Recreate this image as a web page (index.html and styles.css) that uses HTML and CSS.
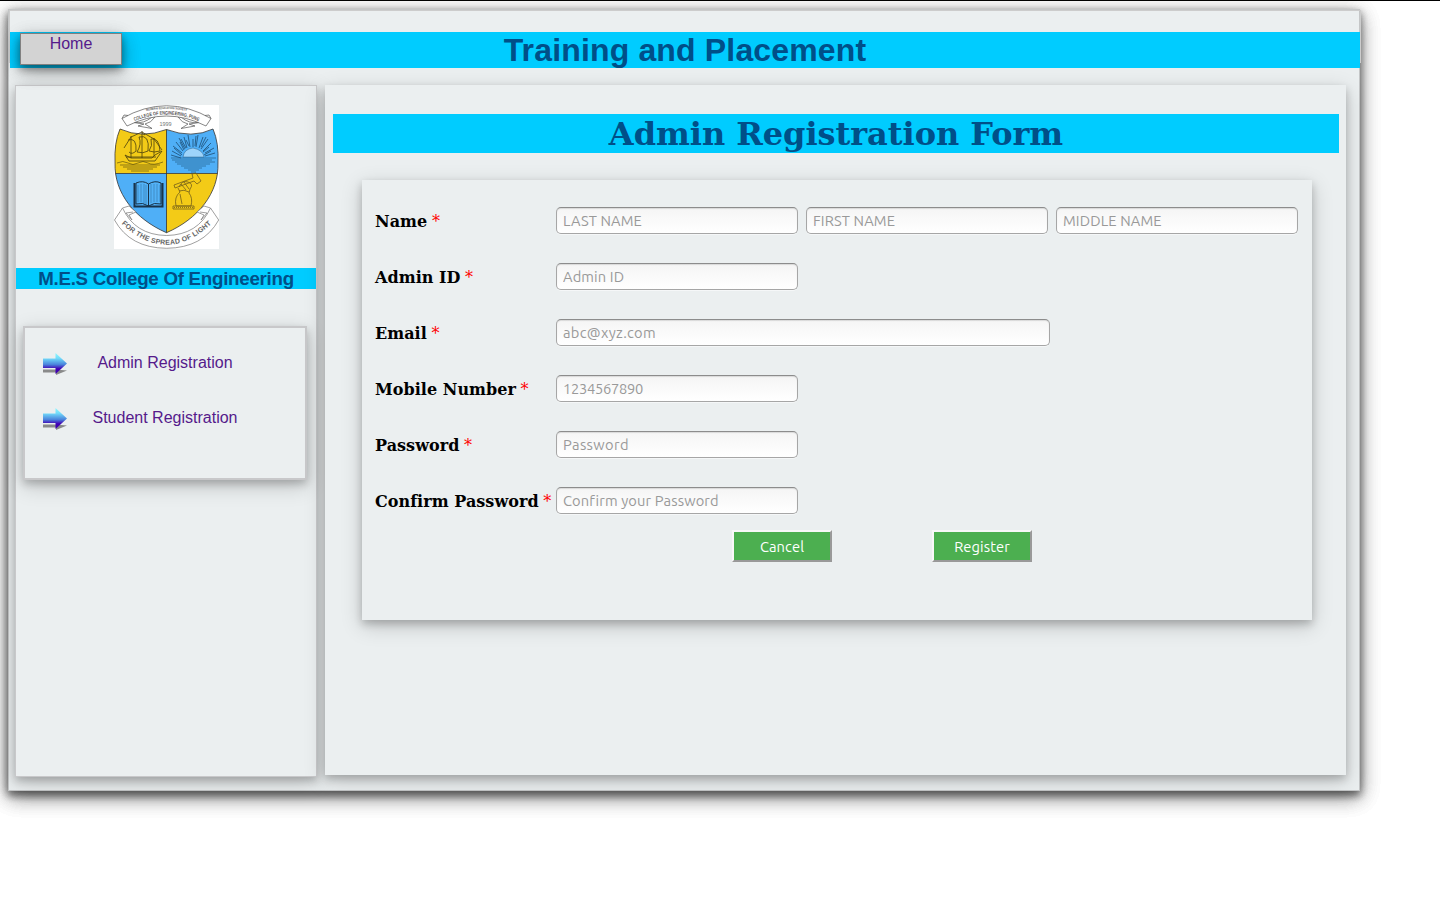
FILE: index.html
```html
<!DOCTYPE html>
<html lang="en">
<head>
<meta charset="utf-8">
<title>Training and Placement</title>
<link rel="stylesheet" href="styles.css">
</head>
<body>
<div class="page">
  <header class="header">
    <h1>Training and Placement</h1>
    <a class="home">Home</a>
  </header>
  <div class="columns">
    <aside class="sidebar">
      <svg class="crest" width="105" height="144" viewBox="0 0 105 144">
        <defs>
          <clipPath id="shield"><path d="M6 24Q28 34 52.500 24.500Q78 34 99 24Q105 38 104 58C105 88 84 114 52.500 127.700C21 114 0 88 1 58Q0 38 6 24Z"/></clipPath>
          <path id="topArc" d="M13 19.500Q52.500 -.5 92 19.500"/>
          <path id="topArc2" d="M26 7.500Q52.500 .5 79 7.500"/>
          <path id="lowArc" d="M5 116.500Q52.500 163 100 116.500"/>
        </defs>
        <rect width="105" height="144" fill="#fff"/>
        <g clip-path="url(#shield)">
          <rect y="20" width="53" height="48.500" fill="#f3cb17"/>
          <rect x="52.500" y="20" width="53" height="48.500" fill="#4faff7"/>
          <rect y="68.500" width="53" height="62" fill="#4faff7"/>
          <rect x="52.500" y="68.500" width="53" height="62" fill="#f3cb17"/>
          <path d="M52.500 20V130M0 68.500H105" stroke="#333" stroke-width=".8"/>
        </g>
        <path d="M6 24Q28 34 52.500 24.500Q78 34 99 24Q105 38 104 58C105 88 84 114 52.500 127.700C21 114 0 88 1 58Q0 38 6 24Z" fill="none" stroke="#333" stroke-width=".8"/>
        <!-- upper ribbon -->
        <g fill="#fff" stroke="#555" stroke-width=".7">
          <path d="M38 12Q30 19 20 17.500L30 19L24 21L38 23.500L31 19Q37 18 41 12ZM67 12Q75 19 85 17.500L75 19L81 21L67 23.500L74 19Q68 18 64 12Z"/>
          <path d="M8 13.500Q52.500-12 97 13.500L92 21Q52.500 1 13 21L8 13.500ZM8 13.500L10 10L14 10.500M97 13.500L95 10L91 10.500"/>
        </g>
        <text class="crest-text" fill="#555"><textPath class="small" href="#topArc2" startOffset="50%" text-anchor="middle" textLength="41" lengthAdjust="spacingAndGlyphs">MODERN EDUCATION SOCIETY</textPath><textPath href="#topArc" startOffset="50%" text-anchor="middle" textLength="66" lengthAdjust="spacingAndGlyphs">COLLEGE OF ENGINEERING, PUNE</textPath></text>
        <text class="crest-year" x="51.500" y="20.500" text-anchor="middle" fill="#777">1999</text>
        <!-- ship -->
        <g fill="none" stroke="#4a400e" stroke-width=".8">
          <path d="M11 50L15 56H41L48 46L41 50L38 53H17ZM17 53V31M28 53V26M40 51V33"/>
          <path d="M14 35Q23 32 22 46Q18 50 15 47M25 32Q36 29 34 46Q29 49 23 47Q28 39 25 32M37 34Q45 32 46 46Q40 48 35 46Q39 41 37 34M10 43L17 32L28 27L40 34L48 45M28 28L31 30M12 52H42"/>
          <path d="M3 58Q9 55 14 58T24 58T34 58T49 57M6 60H46M9 62H43M13 64H39M17 66H35" stroke-width=".6"/>
        </g>
        <!-- rising sun -->
        <g stroke="#1d4d72" fill="none" stroke-width=".8">
          <path d="M69 52Q70 44 79 43Q89 45 90 52Z" fill="#9ed4fb" stroke-width=".4"/>
          <path d="M67 51L58 46M68 48L59 41M69 46L62 37M71 44L65 33M73 43L70 32M76 42L74 30M79 42V34M82 42L84 30M85 43L89 32M87 44L94 34M89 46L97 38M91 48L100 43M91 51L101 48M67 53L57 50M75 41L72 35M81 41L82 31M87 42L92 32M68 50L60 43M70 45L66 37M89 47L95 42M90 50L97 46M72 43L67 34"/>
          <path d="M57 53H102M58 55H98M61 57H101M63 59H96M67 61H92M70 63H88M74 65H85M77 67H82" stroke-width=".6"/>
        </g>
        <!-- open book -->
        <g fill="none" stroke="#18334a">
          <path d="M20.500 78V101.500H48.500V78" stroke-width="2"/>
          <path d="M22 78Q29 75 34.500 79Q41 75 47 78V99Q40 97 34.500 101Q29 97 22 99ZM34.500 79V101" fill="#52b2f7" stroke-width="1"/>
          <path d="M24 80V97M27 79V97M30 79V98M37 79V98M40 79V97M43 79V97M46 80V97M32 80V99" stroke-width=".3"/>
        </g>
        <!-- hand with hammer -->
        <g fill="none" stroke="#73601a" stroke-width=".8">
          <path d="M60 80L79 73L78 69L82 68L87 76L83 79L80 76L61 83ZM65 82Q68 75 74 77Q80 79 76 84L75 88Q79 93 77 101H62Q60 92 66 87L64 83M67 79L72 85M70 77L75 84M65 86Q70 84 75 87M59 101H80V104H59ZM66 89L68 99"/>
          <path d="M60 102.500H80" stroke-dasharray="1 1"/>
        </g>
        <!-- motto ribbon -->
        <g fill="#fff" stroke="#777" stroke-width=".7">
          <path d="M8.500 103Q21 130 52.500 130.500Q84 130 96.500 103L104.700 115Q89 143 52.500 143.300Q16 143 .5 115Z"/>
          <path d="M8.500 103L15 101L22 107L15 110L18 115L12 108L19 107M96.500 103L90 101L83 107L90 110L87 115L93 108L86 107"/>
        </g>
        <text class="crest-motto" fill="#666"><textPath href="#lowArc" startOffset="50%" text-anchor="middle" textLength="102">FOR THE SPREAD OF LIGHT</textPath></text>
      </svg>
      <h3>M.E.S College Of Engineering</h3>
      <nav class="menu">
        <div class="menu-row">
          <svg class="arrow" width="27" height="24" viewBox="0 0 27 24">
            <defs>
              <linearGradient id="blue" x1="0" y1="0" x2="0" y2="1"><stop offset="0" stop-color="#8ff8ff"/><stop offset=".25" stop-color="#72dcfa"/><stop offset=".55" stop-color="#4a83dc"/><stop offset=".75" stop-color="#4200b4"/><stop offset="1" stop-color="#3d00b0"/></linearGradient>
              <filter id="soft" x="-20%" y="-50%" width="140%" height="200%"><feGaussianBlur stdDeviation=".7"/></filter>
            </defs>
            <path d="M1 17.500H14L25 18.500L14 23V20.500H1Z" fill="#555" opacity=".65" filter="url(#soft)"/>
            <path d="M1 6.500H13.500V1L25 11.500L13.500 22V16H1Z" fill="url(#blue)"/>
          </svg>
          <a>Admin Registration</a>
        </div>
        <div class="menu-row">
          <svg class="arrow" width="27" height="24" viewBox="0 0 27 24">
            <path d="M1 17.500H14L25 18.500L14 23V20.500H1Z" fill="#555" opacity=".65" filter="url(#soft)"/>
            <path d="M1 6.500H13.500V1L25 11.500L13.500 22V16H1Z" fill="url(#blue)"/>
          </svg>
          <a>Student Registration</a>
        </div>
      </nav>
    </aside>
    <main class="content">
      <h2>Admin Registration Form</h2>
      <form class="form">
        <div class="row"><label>Name <span>*</span></label><input placeholder="LAST NAME"><input placeholder="FIRST NAME"><input placeholder="MIDDLE NAME"></div>
        <div class="row"><label>Admin ID <span>*</span></label><input placeholder="Admin ID"></div>
        <div class="row"><label>Email <span>*</span></label><input class="wide" placeholder="abc@xyz.com"></div>
        <div class="row"><label>Mobile Number <span>*</span></label><input class="digits" placeholder="1234567890"></div>
        <div class="row"><label>Password <span>*</span></label><input class="loose" placeholder="Password"></div>
        <div class="row"><label>Confirm Password <span>*</span></label><input placeholder="Confirm your Password"></div>
        <div class="actions"><button type="button">Cancel</button><button type="button">Register</button></div>
      </form>
    </main>
  </div>
</div>
</body>
</html>
```
FILE: styles.css
```css
* { box-sizing: border-box; }
:root {
  --lift: 0 4px 8px 0 rgba(0,0,0,.2), 0 6px 20px 0 rgba(0,0,0,.19);
}
html { background: #fff; }
body {
  margin: 0;
  min-height: 100vh;
  border-top: 1px solid #000;
  padding: 8px 0 0 8px;
  background: #fff;
  font: 16px "Liberation Sans", Arial, sans-serif;
}
h1, h2, h3 { margin: 0; text-align: center; color: #004f88; background: #0cf; }
.page {
  width: 1352px;
  height: 782px;
  border: 1px solid #c4c6c7;
  background: #ebeff0;
  box-shadow: var(--lift), var(--lift), var(--lift);
}
.header {
  position: relative;
  width: 1352px;
  height: 53px;
  padding-top: 21px;
  border: 1px solid #ccc;
}
h1 { height: 36px; font-size: 32px; line-height: 36px; letter-spacing: .16px; }
.home {
  position: absolute;
  left: 10px;
  top: 22px;
  width: 102px;
  height: 32px;
  border: 1px solid #808080;
  background: #d3d3d3;
  color: #551a8b;
  text-align: center;
  line-height: 19px;
  box-shadow: var(--lift), var(--lift);
}
.columns { display: flex; align-items: flex-start; gap: 8px; padding: 22px 0 0 6px; }
.sidebar {
  display: flex;
  flex-direction: column;
  width: 302px;
  height: 692px;
  padding-top: 19px;
  border: 1px solid #c8c8ca;
  background: #ebeff0;
  box-shadow: var(--lift);
}
.crest { align-self: center; display: block; margin-right: -1px; }
.crest-text { font-size: 5px; font-weight: bold; }
.crest-text .small { font-size: 3px; }
.crest-year { font-size: 5.5px; }
.crest-motto { font-size: 7px; font-weight: bold; }
h3 { margin-top: 19px; height: 21px; font-size: 18.72px; line-height: 22px; letter-spacing: -.26px; }
.menu {
  margin: 37px 9px 0 7px;
  height: 154px;
  padding: 24px 0 0 17px;
  border: 2px solid #c8c8ca;
  box-shadow: var(--lift);
}
.menu-row { display: flex; align-items: flex-start; height: 55px; }
.menu-row a { width: 194px; text-align: center; color: #551a8b; line-height: 22px; }
.arrow { margin-right: -1px; }
.content {
  width: 1021px;
  height: 690px;
  padding: 29px 7px 0 8px;
  background: #ebeff0;
  box-shadow: var(--lift);
}
h2 { height: 39px; font: bold 32px/41px "DejaVu Serif", serif; letter-spacing: -.04px; }
.form {
  width: 950px;
  height: 440px;
  margin: 27px 0 0 29px;
  padding: 26px 13px 0;
  background: #ebeff0;
  box-shadow: var(--lift);
}
.row { display: flex; align-items: flex-start; gap: 8px; height: 56px; padding-top: 1px; }
.row label { width: 173px; white-space: nowrap; font: bold 16px/29px "DejaVu Serif", serif; letter-spacing: .04px; }
.row label span { margin-left: -1px; color: red; font-weight: normal; }
input {
  width: 242px;
  height: 27px;
  padding: 0 6px;
  border: 1px solid #a6a6a6;
  border-top-color: #8c8c8c;
  border-radius: 5px;
  background: linear-gradient(#f5f5f5, #fff);
  box-shadow: inset 0 1px 1px rgba(0,0,0,.12), 0 1px 0 rgba(255,255,255,.5);
  font: 14.667px Ubuntu, "Noto Sans", sans-serif;
  letter-spacing: .13px;
}
input.wide { width: 494px; letter-spacing: .3px; }
input.digits { letter-spacing: -.28px; }
input.loose { letter-spacing: .36px; }
input::placeholder { color: #999; opacity: 1; }
.actions { display: flex; gap: 100px; margin: -12px 0 0 357px; }
button {
  width: 100px;
  height: 32px;
  padding: 0;
  border: 2px solid;
  border-color: #f8f8f8 #999 #999 #f8f8f8;
  background: #4caf50;
  color: #fff;
  font: 14.667px Ubuntu, "Noto Sans", sans-serif;
  letter-spacing: .1px;
}
```
